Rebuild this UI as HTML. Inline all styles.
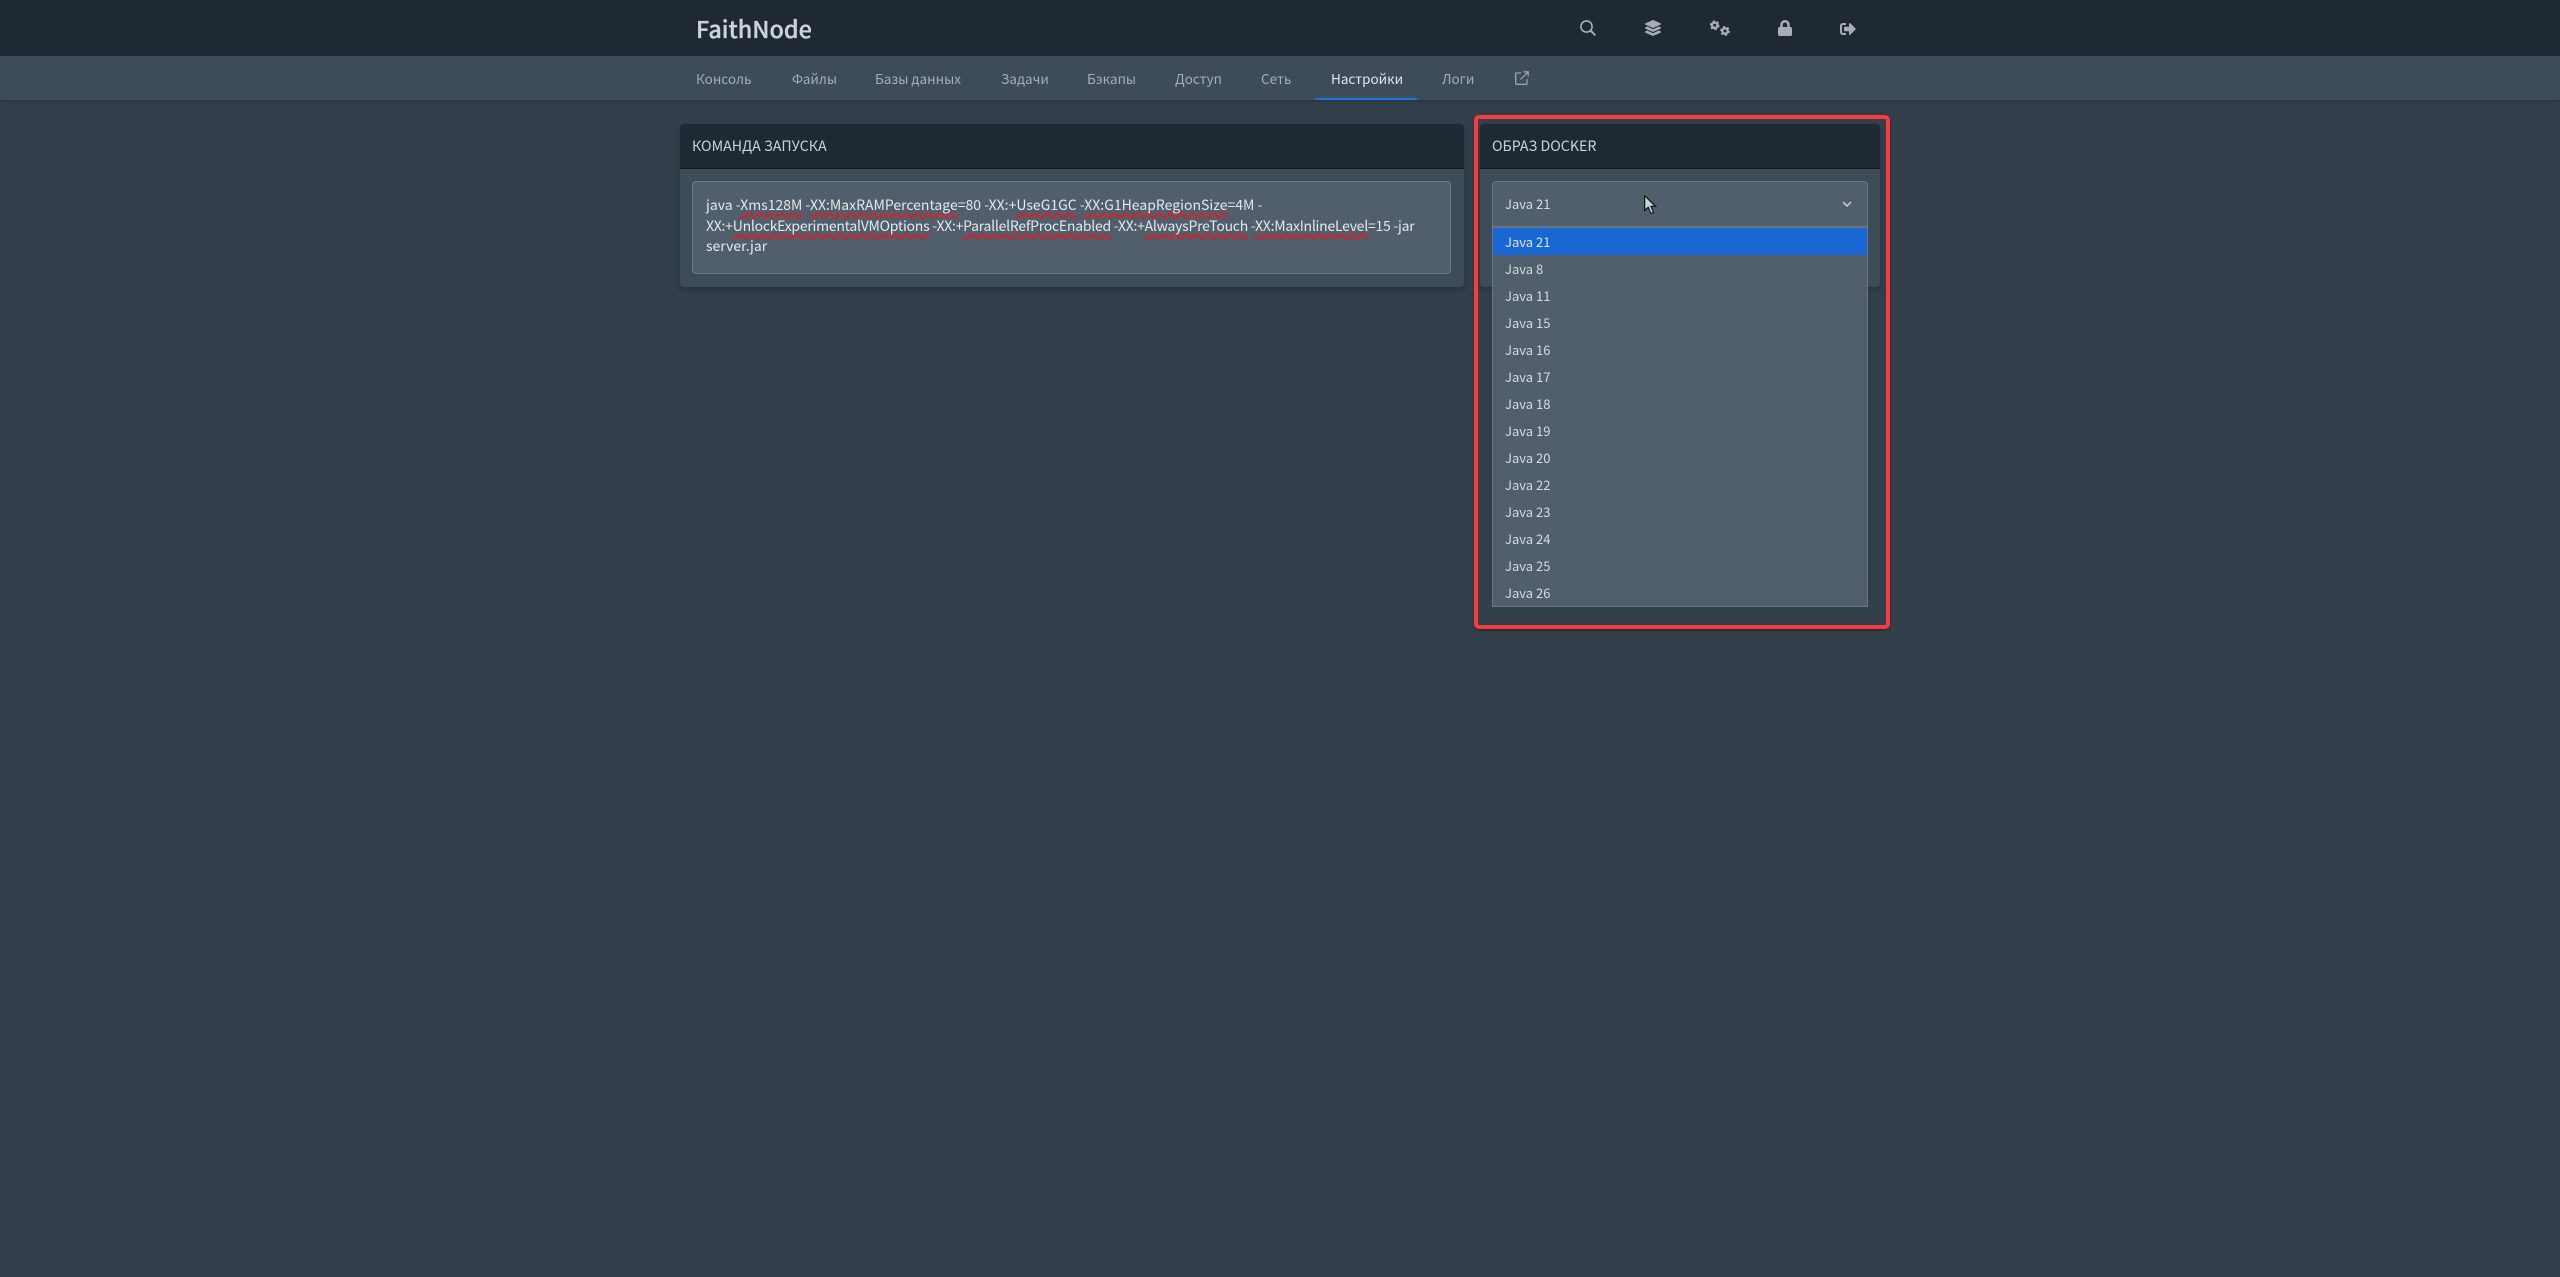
<!DOCTYPE html>
<html lang="ru">
<head>
<meta charset="utf-8">
<title>FaithNode</title>
<style>
html,body{margin:0;padding:0;width:2560px;height:1277px;overflow:hidden;background:#323f4b;}
body{position:relative;font-family:"Noto Sans CJK SC","Liberation Sans",sans-serif;color:#cbd2d9;}
.a{position:absolute;white-space:nowrap;}
#top{left:0;top:0;width:2560px;height:56px;background:#1f2933;}
#sub{left:0;top:56px;width:2560px;height:44px;background:#3e4c59;box-shadow:0 1px 3px rgba(0,0,0,.25);}
.brand{left:696px;top:11px;font-size:23.4px;line-height:34px;font-weight:500;color:#cbd2d9;-webkit-text-stroke:.35px #cbd2d9;}
.nav{top:56px;line-height:44px;font-size:13.5px;color:#a3aeb9;}
.nav.on{color:#e4e7eb;}
.ul{left:1315px;top:98px;width:102px;height:2px;background:#1c74e4;}
.card{background:#3e4c59;border-radius:4px;box-shadow:0 4px 6px rgba(0,0,0,.18);}
.head{background:#1f2933;border-radius:4px 4px 0 0;height:44px;border-bottom:1px solid #11181f;box-sizing:content-box;}
.ht{font-size:14.2px;line-height:20px;color:#cbd2d9;top:136px;}
.ta{left:692px;top:181px;width:759px;height:93px;box-sizing:border-box;background:#515f6c;border:1px solid #6d7a87;border-radius:4px;}
.tl{left:706px;font-size:14px;line-height:20px;color:#e4e7eb;}
.tl u{text-decoration:underline wavy #d81f2a 1.5px;text-underline-offset:2px;text-decoration-skip-ink:none;}
.sel{left:1492px;top:181px;width:376px;height:46px;box-sizing:border-box;background:#515f6c;border:1px solid #697582;border-radius:4px 4px 0 0;}
.drop{left:1492px;top:227px;width:376px;height:380px;box-sizing:border-box;background:#515f6c;border:1px solid #697582;}
.o{left:1505px;font-size:13px;line-height:27px;height:27px;color:#d5dbe1;}
.hi{left:1493px;top:228px;width:374px;height:27px;background:#1967d2;}
.red{left:1474px;top:115px;width:416px;height:514px;box-sizing:border-box;border:4px solid #f63c3c;border-radius:5px;box-shadow:0 1px 2px rgba(0,0,0,.4);}
svg{position:absolute;display:block;}
</style>
</head>
<body>
<div class="a" id="top"></div>
<div class="a" id="sub"></div>
<div class="a brand">FaithNode</div>

<svg style="left:1580px;top:20px" width="16" height="16" viewBox="0 0 16 16" fill="none" stroke="#a8aeb5" stroke-width="1.6"><circle cx="6.5" cy="6.5" r="5.6"/><path d="M10.7 10.7L15.3 15.3" stroke-width="2"/></svg>
<svg style="left:1645px;top:20px" width="16" height="16" viewBox="0 0 512 512" fill="#a8aeb5"><path d="M12.41 148.02l232.94 105.67c6.8 3.09 14.49 3.09 21.29 0l232.94-105.67c16.55-7.51 16.55-32.52 0-40.03L266.65 2.31a25.607 25.607 0 0 0-21.29 0L12.41 107.98c-16.55 7.51-16.55 32.53 0 40.04zm487.18 88.28l-58.09-26.33-161.64 73.27c-7.56 3.43-15.59 5.17-23.86 5.17s-16.29-1.74-23.86-5.17L70.51 209.97l-58.1 26.33c-16.55 7.5-16.55 32.5 0 40l232.94 105.59c6.8 3.08 14.49 3.08 21.29 0L499.59 276.3c16.55-7.5 16.55-32.5 0-40zm0 127.8l-57.87-26.23-161.86 73.37c-7.56 3.43-15.59 5.17-23.86 5.17s-16.29-1.74-23.86-5.17L70.29 337.87 12.41 364.1c-16.55 7.5-16.55 32.5 0 40l232.94 105.59c6.8 3.08 14.49 3.08 21.29 0L499.59 404.1c16.55-7.5 16.55-32.5 0-40z"/></svg>
<svg style="left:1710px;top:20px" width="20" height="16" viewBox="0 0 20 16" fill="none" stroke="#a8aeb5"><circle cx="4.7" cy="5.3" r="2.7" stroke-width="2.4"/><circle cx="4.7" cy="5.3" r="4.2" stroke-width="1.5" stroke-dasharray="2.2 2.2"/><circle cx="15" cy="11" r="2.7" stroke-width="2.4"/><circle cx="15" cy="11" r="4.2" stroke-width="1.5" stroke-dasharray="2.2 2.2"/></svg>
<svg style="left:1778px;top:20px" width="14" height="16" viewBox="0 0 448 512" fill="#a8aeb5"><path d="M400 224h-24v-72C376 68.2 307.8 0 224 0S72 68.2 72 152v72H48c-26.5 0-48 21.5-48 48v192c0 26.5 21.5 48 48 48h352c26.5 0 48-21.5 48-48V272c0-26.5-21.5-48-48-48zm-104 0H152v-72c0-39.7 32.3-72 72-72s72 32.3 72 72v72z"/></svg>
<svg style="left:1840px;top:21px" width="16" height="16" viewBox="0 0 512 512" fill="#a8aeb5"><path d="M497 273L329 441c-15 15-41 4.5-41-17v-96H152c-13.3 0-24-10.7-24-24v-96c0-13.3 10.7-24 24-24h136V88c0-21.4 25.9-32 41-17l168 168c9.3 9.4 9.3 24.6 0 34zM192 436v-40c0-6.6-5.4-12-12-12H96c-17.7 0-32-14.3-32-32V160c0-17.7 14.3-32 32-32h84c6.6 0 12-5.4 12-12V76c0-6.6-5.4-12-12-12H96c-53 0-96 43-96 96v192c0 53 43 96 96 96h84c6.6 0 12-5.4 12-12z"/></svg>

<div class="a nav" style="left:696px">Консоль</div>
<div class="a nav" style="left:792px">Файлы</div>
<div class="a nav" style="left:875px">Базы данных</div>
<div class="a nav" style="left:1001px">Задачи</div>
<div class="a nav" style="left:1087px">Бэкапы</div>
<div class="a nav" style="left:1175px">Доступ</div>
<div class="a nav" style="left:1261px">Сеть</div>
<div class="a nav on" style="left:1331px">Настройки</div>
<div class="a nav" style="left:1442px">Логи</div>
<svg style="left:1515px;top:71px" width="14" height="14" viewBox="0 0 14 14" fill="none" stroke="#9aa5b1" stroke-width="1.3"><path d="M6 2H1.6C1 2 .7 2.3 .7 2.9v9.5c0 .6.3.9.9.9h9.5c.6 0 .9-.3.9-.9V8"/><path d="M5.5 8.5L13 1M8.5 .8h4.7v4.7"/></svg>
<div class="a ul"></div>

<div class="a card" style="left:680px;top:124px;width:784px;height:163px"><div class="head"></div></div>
<div class="a ht" style="left:692px">КОМАНДА ЗАПУСКА</div>
<div class="a ta"></div>
<div class="a tl" style="top:195px">java -<u>Xms128M</u> -<u>XX:MaxRAMPercentage</u>=80 -XX:+<u>UseG1GC</u> -<u>XX:G1HeapRegionSize</u>=4M -</div>
<div class="a tl" style="top:216px;letter-spacing:-.25px">XX:+<u>UnlockExperimentalVMOptions</u> -XX:+<u>ParallelRefProcEnabled</u> -XX:+<u>AlwaysPreTouch</u> -<u>XX:MaxInlineLevel</u>=15 -jar</div>
<div class="a tl" style="top:236px">server.jar</div>

<div class="a card" style="left:1480px;top:124px;width:400px;height:163px"><div class="head"></div></div>
<div class="a ht" style="left:1492px">ОБРАЗ DOCKER</div>
<div class="a sel"></div>
<div class="a o" style="top:190px">Java 21</div>
<svg style="left:1842px;top:201px" width="10" height="7" viewBox="0 0 10 7" fill="none" stroke="#cbd2d9" stroke-width="1.5"><path d="M1 1L5 5L9 1"/></svg>

<div class="a drop"></div>
<div class="a hi"></div>
<div class="a o" style="top:228px;color:#e4e7eb">Java 21</div>
<div class="a o" style="top:255px">Java 8</div>
<div class="a o" style="top:282px">Java 11</div>
<div class="a o" style="top:309px">Java 15</div>
<div class="a o" style="top:336px">Java 16</div>
<div class="a o" style="top:363px">Java 17</div>
<div class="a o" style="top:390px">Java 18</div>
<div class="a o" style="top:417px">Java 19</div>
<div class="a o" style="top:444px">Java 20</div>
<div class="a o" style="top:471px">Java 22</div>
<div class="a o" style="top:498px">Java 23</div>
<div class="a o" style="top:525px">Java 24</div>
<div class="a o" style="top:552px">Java 25</div>
<div class="a o" style="top:579px">Java 26</div>

<div class="a red"></div>

<svg style="left:1644px;top:195px" width="13" height="20" viewBox="0 0 13 20"><path d="M.7 .7V15.5L4.2 12.2L6.9 18.6L9.6 17.4L6.9 11.4H11.6Z" fill="#cfd6d8" stroke="#0d1318" stroke-width="1.2"/></svg>
</body>
</html>
